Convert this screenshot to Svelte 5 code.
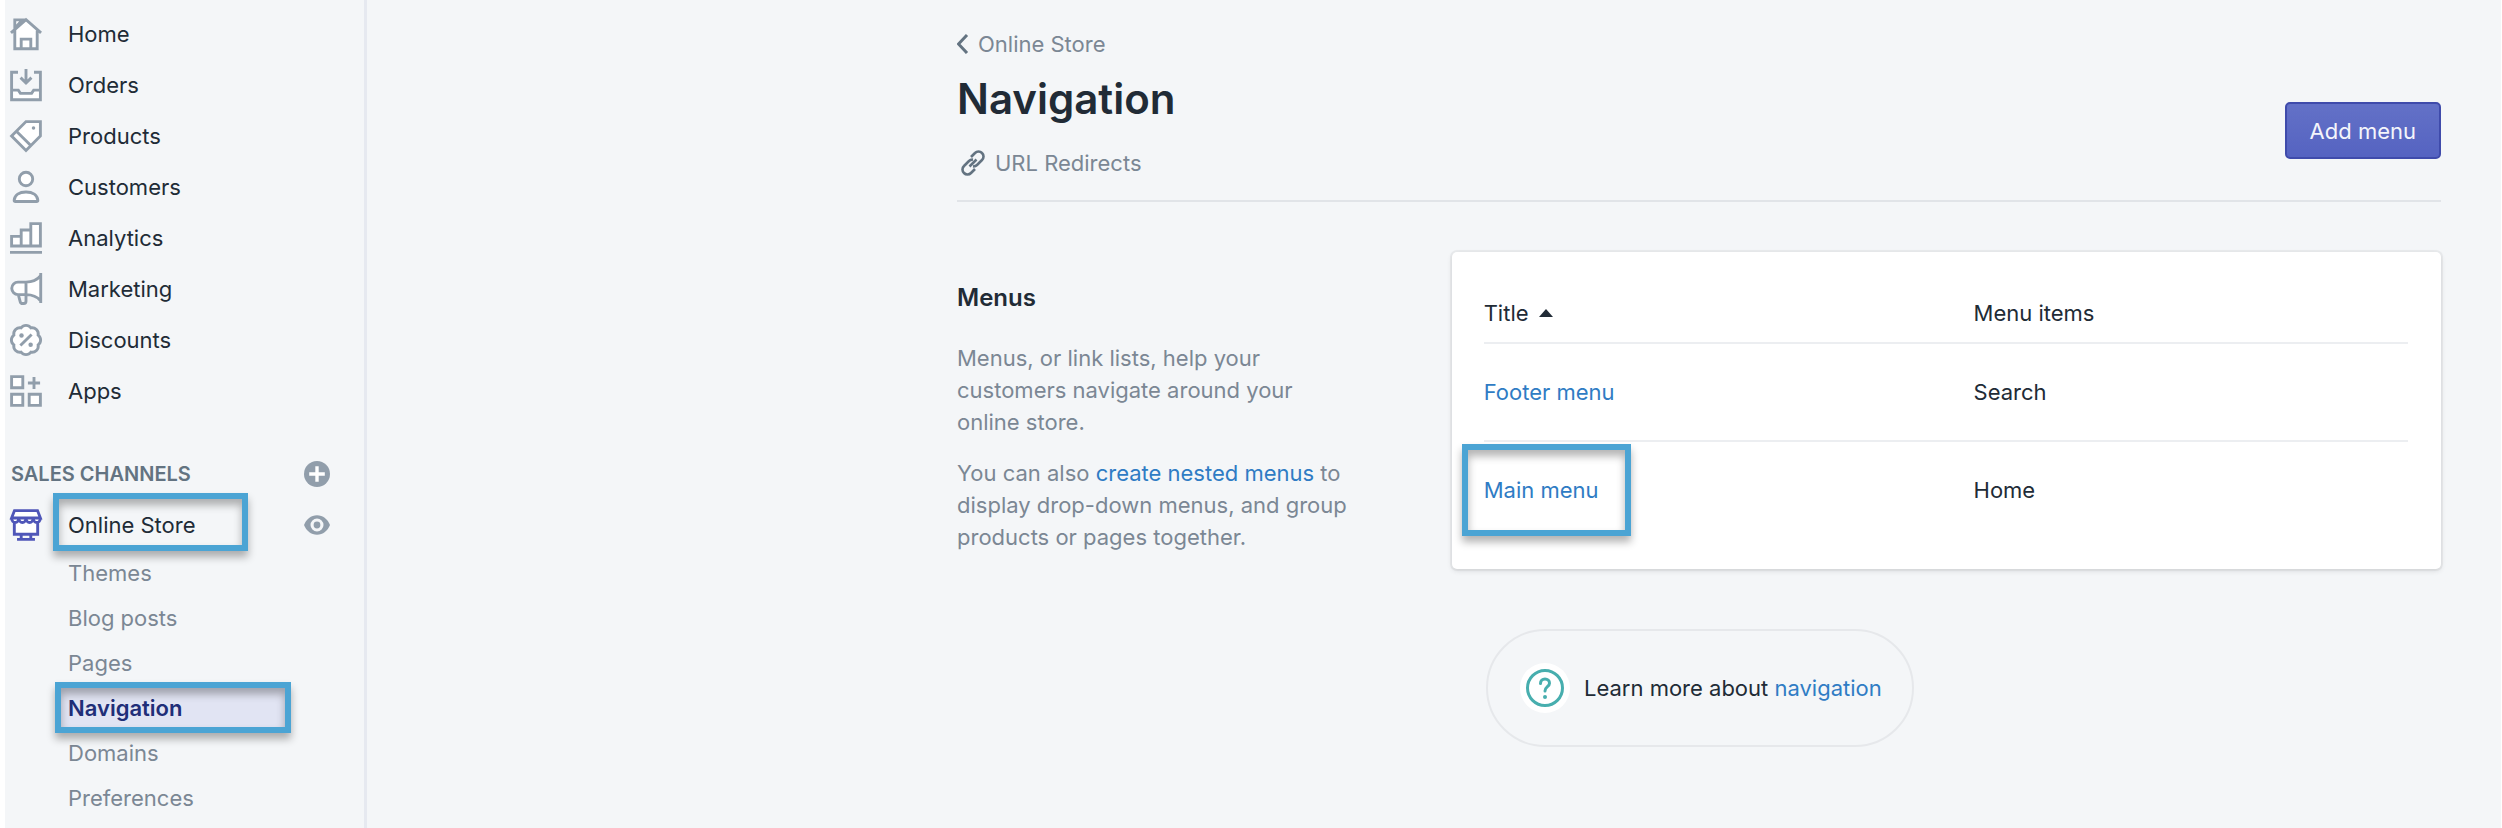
<script lang="ts">
  type NavItem = { label: string; icon: string };
  type Menu = { title: string; items: string; marked: boolean };

  const navItems: NavItem[] = [
    { label: 'Home', icon: 'home' },
    { label: 'Orders', icon: 'orders' },
    { label: 'Products', icon: 'products' },
    { label: 'Customers', icon: 'customers' },
    { label: 'Analytics', icon: 'analytics' },
    { label: 'Marketing', icon: 'marketing' },
    { label: 'Discounts', icon: 'discounts' },
    { label: 'Apps', icon: 'apps' },
  ];

  const storePages = ['Themes', 'Blog posts', 'Pages', 'Navigation', 'Domains', 'Preferences'];
  const currentPage = 'Navigation';

  let ascending = $state(true);
  const menus: Menu[] = [
    { title: 'Footer menu', items: 'Search', marked: false },
    { title: 'Main menu', items: 'Home', marked: true },
  ];
  let sortedMenus = $derived(ascending ? menus : [...menus].reverse());
</script>

<div class="app">
  <aside class="sidebar">
    <nav aria-label="Main">
      <ul class="nav-list">
        {#each navItems as item}
          <li>
            <a class="nav-link" href="#{item.icon}">
              <svg class="nav-icon" viewBox="0 0 20 20" aria-hidden="true">
                {#if item.icon === 'home'}
                  <path class="solid" d="M3 8.5V1h4.5v2L10 1l7 6.5V19H3z" />
                  <path d="M3 8V1.2h4.6L3 6.5M.6 9.3 10 1l9.4 8.3M3 8v11.2h14V8" />
                  <path d="M7 19v-5.8h6V19" />
                {:else if item.icon === 'orders'}
                  <path class="solid" d="M1 13h4l1.5 2h7l1.5-2h4v6H1z" />
                  <path d="M5 2H1v17.2h18V2h-4M1 13.2h4.2l1.3 2h7l1.3-2H19M10 0v8.5M6.6 5.4 10 8.8l3.4-3.4" />
                {:else if item.icon === 'products'}
                  <path class="solid" d="M10 1h9v9l-9 9-9-9z" />
                  <path d="M10 1h9v9l-9 9-9-9zM4 7l9 9" />
                  <circle class="dot" cx="14.7" cy="5" r="1.1" />
                {:else if item.icon === 'customers'}
                  <circle class="solid" cx="10" cy="5" r="4.2" />
                  <path class="solid" d="M3.4 19.1h13.2c.5 0 .8-.3.8-.8-.2-3.2-3.2-5.2-7.4-5.2s-7.2 2-7.4 5.2c0 .5.3.8.8.8z" />
                  <circle cx="10" cy="5" r="4.2" />
                  <path d="M3.4 19.1h13.2c.5 0 .8-.3.8-.8-.2-3.2-3.2-5.2-7.4-5.2s-7.2 2-7.4 5.2c0 .5.3.8.8.8z" />
                {:else if item.icon === 'analytics'}
                  <path class="solid" d="M1 9h6V5h6V1h6v14H1z" />
                  <path d="M1 9h6v6H1zM7 9V5h6v10H7M13 5V1h6v14h-6M0 19h20" />
                {:else if item.icon === 'marketing'}
                  <path class="solid" d="M19 1.8c-2 2.5-5.5 3.9-9 3.9H5a3.9 3.9 0 0 0 0 7.8h5c3.5 0 7 1.3 9 3.8z" />
                  <path d="M19.200 0v18.800M19 1.800c-2 2.500-5.500 3.900-9 3.900H5a3.900 3.900 0 0 0 0 7.800h5c3.500 0 7 1.300 9 3.800M10 5.700v12c0 .9-.6 1.400-1.400 1.400h-.8c-.7 0-1.200-.4-1.400-1.100L5.200 13.500" />
                {:else if item.icon === 'discounts'}
                  <path class="scallop" d="M17.600 6.900a3.900 3.900 0 0 1 0 6.200 3.900 3.900 0 0 1-4.500 4.500 3.900 3.900 0 0 1-6.200 0 3.900 3.900 0 0 1-4.500-4.500 3.900 3.900 0 0 1 0-6.200 3.900 3.900 0 0 1 4.500-4.500 3.900 3.900 0 0 1 6.200 0 3.900 3.900 0 0 1 4.500 4.500z" />
                  <path d="M13.500 6.500l-7 7" />
                  <circle class="dot" cx="7.200" cy="7.200" r="1.400" />
                  <circle class="dot" cx="12.900" cy="12.900" r="1.400" />
                {:else}
                  <path class="solid" d="M1 1h7v7H1zM1 12h7v7H1zM12 12h7v7h-7z" />
                  <path d="M1 1h7v7H1zM1 12h7v7H1zM12 12h7v7h-7zM15 1.200v7.600M11.200 5h7.600" />
                {/if}
              </svg>
              {item.label}
            </a>
          </li>
        {/each}
      </ul>
    </nav>

    <div class="section-head">
      <h2>Sales channels</h2>
      <button class="icon-button" type="button" aria-label="Add sales channel">
        <svg viewBox="0 0 20 20" aria-hidden="true">
          <circle class="dot" cx="10" cy="10" r="10" />
          <path class="knockout" d="M10 4v12M4 10h12" />
        </svg>
      </button>
    </div>

    <nav aria-label="Sales channels">
      <div class="channel">
        <a class="nav-link" href="#online-store">
          <svg class="nav-icon store" viewBox="0 0 20 20" aria-hidden="true">
            <path class="solid" d="M3 1h14l2 5v2l-1.500 1v6.800h-15V9L1 8V6z" />
            <path d="M2.800 1h14.400L19 5.600H1zM1 5.600c0 3.800 4.500 3.800 4.500 0 0 3.800 4.500 3.800 4.500 0 0 3.800 4.500 3.800 4.500 0 0 3.800 4.500 3.800 4.500 0M2.700 8.400v7.400h14.600V8.400M7 16v3M13 16v3M4.400 19h11.200" />
          </svg>
          <span class="marked marked-store">Online Store</span>
        </a>
        <button class="icon-button" type="button" aria-label="View your online store">
          <svg viewBox="0 0 20 20" aria-hidden="true">
            <path class="dot" d="M10 2.500c-4.600 0-8.300 3.200-10 7.500 1.700 4.300 5.400 7.500 10 7.500s8.300-3.200 10-7.500c-1.700-4.300-5.400-7.500-10-7.500z" />
            <circle class="pupil" cx="10" cy="10" r="3.800" />
          </svg>
        </button>
      </div>
      <ul class="sub-list">
        {#each storePages as page}
          <li>
            <a class="sub-link" class:current={page === currentPage} class:marked={page === currentPage} href="#store">{page}</a>
          </li>
        {/each}
      </ul>
    </nav>
  </aside>

  <main>
    <header class="page-header">
      <div>
        <a class="quiet-link" href="#online-store">
          <svg class="chevron" viewBox="0 0 12 20" aria-hidden="true"><path d="M10 1 1.500 10l8.500 9" /></svg>
          Online Store
        </a>
        <h1>Navigation</h1>
        <a class="quiet-link redirects" href="#redirects">
          <svg class="chain" viewBox="0 0 26 26" aria-hidden="true">
            <path d="M11 7 15 3a4.800 4.800 0 0 1 7 0 4.800 4.800 0 0 1 0 7l-5 5a4.800 4.800 0 0 1-4 1.300M15 19l-4 4a4.800 4.800 0 0 1-7 0 4.800 4.800 0 0 1 0-7l5-5a4.800 4.800 0 0 1 4-1.300M9.500 16.500l7-7" />
          </svg>
          URL Redirects
        </a>
      </div>
      <button class="primary" type="button">Add menu</button>
    </header>

    <section class="layout">
      <div class="annotation">
        <h2>Menus</h2>
        <p>Menus, or link lists, help your customers navigate around your online store.</p>
        <p>You can also <a href="#nested">create nested menus</a> to display drop-down menus, and group products or pages together.</p>
      </div>

      <div class="card">
        <table>
          <thead>
            <tr>
              <th scope="col" aria-sort={ascending ? 'ascending' : 'descending'}>
                <button class="sort" type="button" onclick={() => (ascending = !ascending)}>
                  Title
                  <svg class:flipped={!ascending} viewBox="0 0 14 8" aria-hidden="true"><path d="M0 8 7 0l7 8z" /></svg>
                </button>
              </th>
              <th scope="col">Menu items</th>
            </tr>
          </thead>
          <tbody>
            {#each sortedMenus as menu}
              <tr>
                <td><a class:marked={menu.marked} class:marked-menu={menu.marked} href="#menu">{menu.title}</a></td>
                <td>{menu.items}</td>
              </tr>
            {/each}
          </tbody>
        </table>
      </div>
    </section>

    <footer class="help">
      <svg viewBox="0 0 50 50" aria-hidden="true">
        <circle class="halo" cx="25" cy="25" r="25" />
        <circle class="ring" cx="25" cy="25" r="17.500" />
        <path class="ring" d="M20.500 20.500c0-2.800 2-4.500 4.500-4.500s4.500 1.800 4.500 4.200c0 3.500-4.500 3.600-4.500 7.800" />
        <circle class="point" cx="25" cy="34" r="2" />
      </svg>
      <p>Learn more about <a href="#help">navigation</a></p>
    </footer>
  </main>
</div>

<style>
  :global(body) {
    margin: 0;
    background: #fff;
  }

  .app {
    display: flex;
    min-height: 100vh;
    margin: 0 1px 0 5px;
    background: #f4f6f8;
    color: #212b36;
    font: 22px/32px Inter, 'Liberation Sans', sans-serif;
  }

  h1, h2, p, ul {
    margin: 0;
    padding: 0;
  }

  ul {
    list-style: none;
  }

  a {
    color: #2f7cc4;
    text-decoration: none;
  }

  button {
    font: inherit;
    color: inherit;
    cursor: pointer;
  }

  svg {
    flex: none;
    fill: none;
  }

  .sidebar {
    flex: 0 0 359px;
    padding-top: 8px;
    border-right: 3px solid #e6e9f0;
  }

  .nav-link {
    display: flex;
    align-items: center;
    gap: 26px;
    height: 51px;
    padding-left: 5px;
    color: #212b36;
  }

  .nav-icon {
    width: 32px;
    height: 32px;
    stroke: #919eab;
    stroke-width: 1.8;
    overflow: visible;
  }

  .nav-icon .solid {
    fill: #fff;
    stroke: none;
  }

  .scallop {
    fill: #fff;
  }

  .nav-icon .dot,
  .dot {
    fill: #919eab;
    stroke: none;
  }

  .store {
    stroke: #4f56b8;
  }

  .section-head {
    display: flex;
    align-items: center;
    justify-content: space-between;
    margin-top: 32px;
    padding: 0 34px 0 6px;
    height: 51px;
  }

  .section-head h2 {
    font-size: 20px;
    font-weight: 600;
    text-transform: uppercase;
    color: #637381;
  }

  .channel {
    display: flex;
    align-items: center;
    justify-content: space-between;
    padding-right: 34px;
  }

  .icon-button {
    display: flex;
    padding: 0;
    border: 0;
    background: none;
  }

  .icon-button svg {
    width: 26px;
    height: 26px;
  }

  .knockout {
    stroke: #fff;
    stroke-width: 2.6;
  }

  .pupil {
    fill: #919eab;
    stroke: #f4f6f8;
    stroke-width: 2.4;
  }

  .sub-link {
    display: flex;
    align-items: center;
    height: 45px;
    margin: 0 73px 0 50px;
    padding-left: 13px;
    color: #7b8794;
  }

  .sub-link.current {
    background: #e1e4f3;
    color: #202e78;
    font-weight: 600;
  }

  /* Frame drawn around the links a reader should follow */
  .marked {
    position: relative;
  }

  .marked::after {
    content: '';
    position: absolute;
    inset: -3px 0;
    border: 6px solid #4ba4d4;
    box-shadow: 0 6px 8px rgba(0, 0, 0, 0.3), inset 0 6px 8px rgba(0, 0, 0, 0.3);
  }

  .marked-store::after {
    inset: -16px -52px -10px -15px;
  }

  .marked-menu::after {
    inset: -33px -32px -33px -22px;
  }

  main {
    flex: 1;
    min-width: 0;
    padding: 28px 60px 0 590px;
  }

  .page-header {
    display: flex;
    justify-content: space-between;
    align-items: flex-end;
    padding-bottom: 21px;
    border-bottom: 2px solid #e1e4e8;
  }

  .quiet-link {
    display: flex;
    align-items: center;
    gap: 9px;
    color: #7b8794;
  }

  .chevron {
    width: 12px;
    height: 20px;
    stroke: #637381;
    stroke-width: 3;
  }

  .chain {
    width: 26px;
    height: 26px;
    stroke: #637381;
    stroke-width: 2.6;
  }

  .redirects {
    gap: 9px;
    padding-left: 3px;
  }

  h1 {
    margin: 13px 0 22px;
    font-size: 42px;
    line-height: 52px;
    font-weight: 600;
  }

  .primary {
    height: 57px;
    margin-bottom: 20px;
    padding: 0 23px;
    border: 2px solid #3f4bab;
    border-radius: 5px;
    background: linear-gradient(#6371c7, #5563c1);
    color: #f4f5fb;
  }

  .layout {
    display: grid;
    grid-template-columns: 1fr 2fr;
    margin-top: 50px;
  }

  .annotation {
    padding: 30px 98px 0 0;
    color: #7b8794;
  }

  .annotation h2 {
    margin-bottom: 28px;
    font-size: 24px;
    font-weight: 600;
    color: #212b36;
  }

  .annotation p + p {
    margin-top: 19px;
  }

  .card {
    padding: 32px 33px 31px 32px;
    border-radius: 5px;
    background: #fff;
    box-shadow: 0 0 0 2px rgba(63, 63, 68, 0.05), 0 2px 5px rgba(63, 63, 68, 0.15);
  }

  table {
    width: 100%;
    border-collapse: collapse;
  }

  th, td {
    padding: 0;
    text-align: left;
    font-weight: 400;
  }

  th {
    width: 47%;
    height: 58px;
  }

  th:first-child {
    width: 53%;
  }

  td {
    height: 96px;
    border-top: 2px solid #eceef1;
  }

  .sort {
    display: flex;
    align-items: center;
    gap: 10px;
    padding: 0;
    border: 0;
    background: none;
  }

  .sort svg {
    width: 14px;
    height: 8px;
    fill: #212b36;
  }

  .flipped {
    transform: rotate(180deg);
  }

  .help {
    display: flex;
    align-items: center;
    gap: 14px;
    width: fit-content;
    height: 114px;
    margin: 60px 0 0 529px;
    padding: 0 30px 0 32px;
    border: 2px solid #e6e8eb;
    border-radius: 59px;
  }

  .help svg {
    width: 50px;
    height: 50px;
  }

  .halo {
    fill: #fff;
  }

  .ring {
    stroke: #47aeae;
    stroke-width: 3;
    stroke-linecap: round;
  }

  .point {
    fill: #47aeae;
  }
</style>
